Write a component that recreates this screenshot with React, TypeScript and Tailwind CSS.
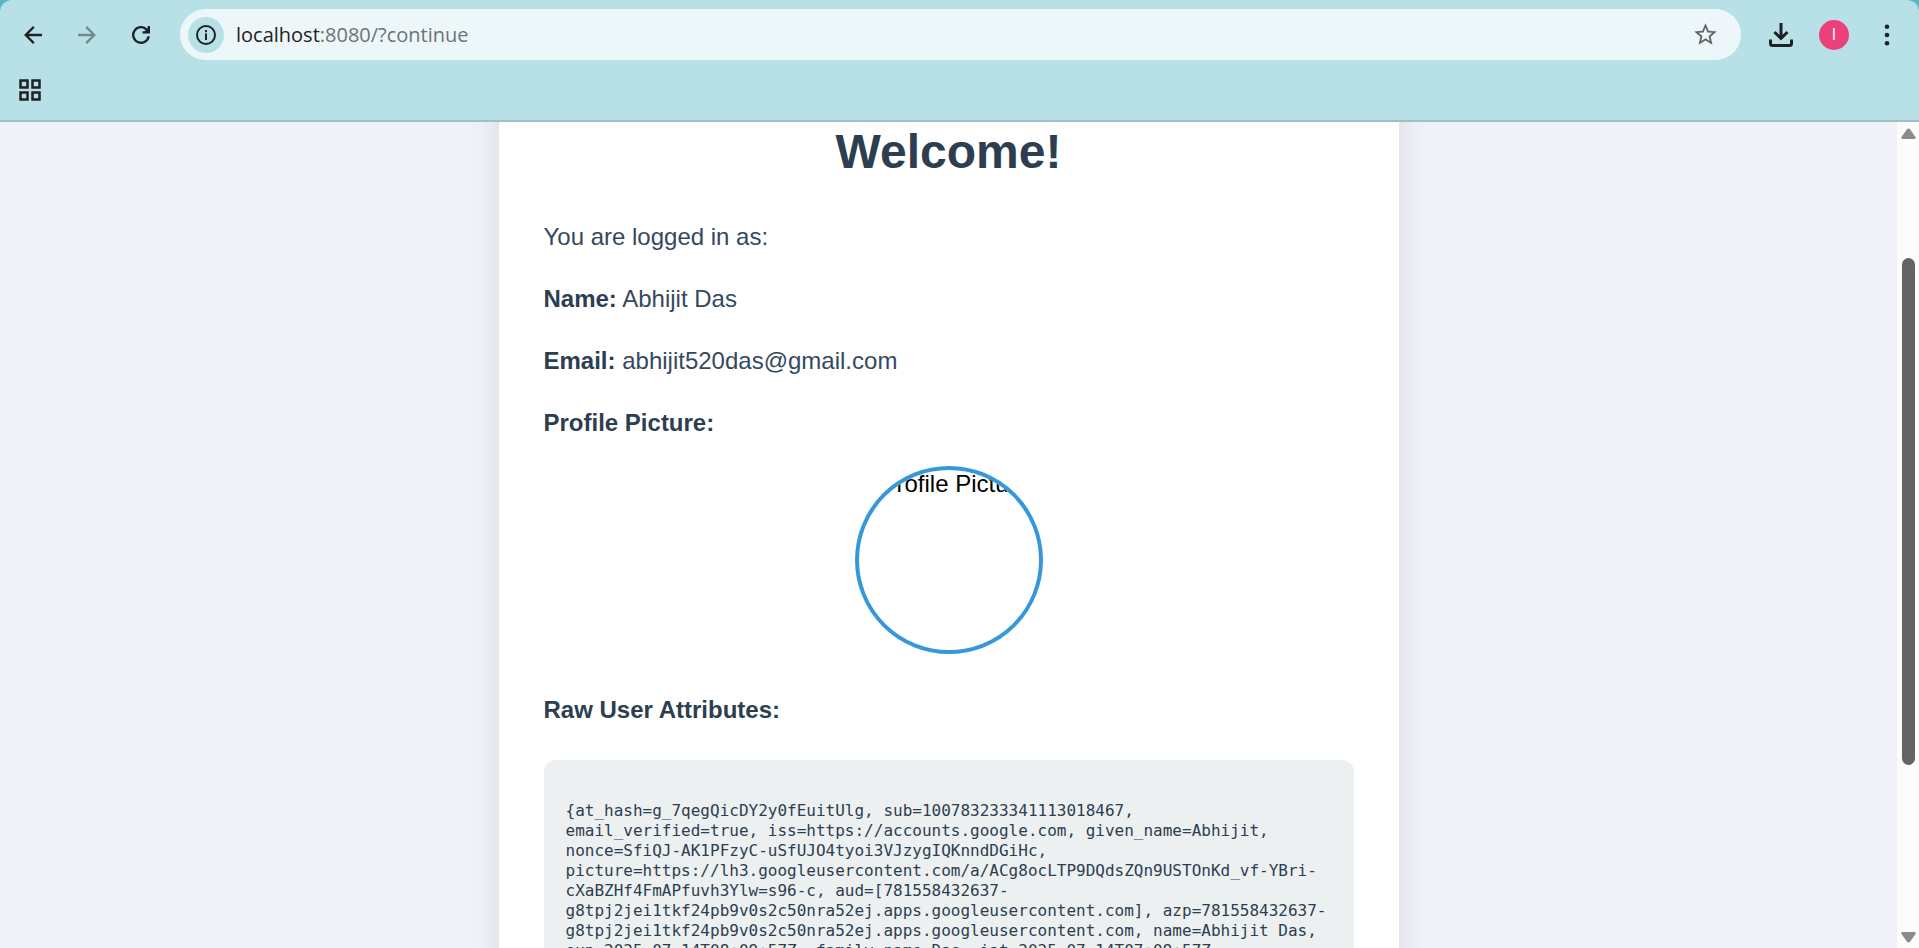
import type { ReactNode } from "react";

const attributes =
  "{at_hash=g_7qegQicDY2y0fEuitUlg, sub=100783233341113018467, email_verified=true, iss=https://accounts.google.com, given_name=Abhijit, nonce=SfiQJ-AK1PFzyC-uSfUJO4tyoi3VJzygIQKnndDGiHc, picture=https://lh3.googleusercontent.com/a/ACg8ocLTP9DQdsZQn9USTOnKd_vf-YBri-cXaBZHf4FmAPfuvh3Ylw=s96-c, aud=[781558432637-g8tpj2jei1tkf24pb9v0s2c50nra52ej.apps.googleusercontent.com], azp=781558432637-g8tpj2jei1tkf24pb9v0s2c50nra52ej.apps.googleusercontent.com, name=Abhijit Das, exp=2025-07-14T08:09:57Z, family_name=Das, iat=2025-07-14T07:09:57Z,";

function IconButton({ label, children }: { label: string; children: ReactNode }) {
  return (
    <button type="button" aria-label={label} className="flex size-9 shrink-0 items-center justify-center rounded-full text-[#1f2124]">
      {children}
    </button>
  );
}

function Arrow({ flip = false }: { flip?: boolean }) {
  return (
    <svg width="18" height="18" viewBox="0 0 18 18" fill="none" stroke="currentColor" strokeWidth="2.3" className={flip ? "-scale-x-100" : ""}>
      <path d="M18 9H2M9.8 0.900L1.700 9l8.100 8.100" />
    </svg>
  );
}

function Toolbar() {
  return (
    <div className="flex h-[69px] items-center pl-[15px] pr-[14px]">
      <nav aria-label="History" className="flex gap-[18px]">
        <IconButton label="Back">
          <Arrow />
        </IconButton>
        <button type="button" aria-label="Forward" disabled className="flex size-9 items-center justify-center text-[#73898d]">
          <Arrow flip />
        </button>
        <IconButton label="Reload">
          <svg width="18" height="18" viewBox="0 0 18 18" fill="none" stroke="currentColor" strokeWidth="2.3">
            <path d="M16.700 10.200A7.800 7.800 0 1 1 14.400 3.300L16.500 5.400" />
            <path d="M16.850 0v6.350H10.500" />
            <path d="M17 1v5.500h-5.500z" fill="currentColor" stroke="none" />
          </svg>
        </IconButton>
      </nav>
      <div className="ml-[21px] flex h-[51px] min-w-0 flex-1 items-center rounded-full bg-[#edf7f9] pl-2 pr-[18px]">
        <button type="button" aria-label="Site information" className="flex size-9 shrink-0 items-center justify-center rounded-full bg-[#b7e1e6] text-[#1f2124]">
          <svg width="20" height="20" viewBox="0 0 20 20" fill="none" stroke="currentColor" strokeWidth="2">
            <circle cx="10" cy="10" r="9" />
            <path d="M10 8.500v6.500M10 5v2.200" />
          </svg>
        </button>
        <a href="#top" className="ml-3 flex-1 truncate font-['Open_Sans','Noto_Sans',sans-serif] text-[20px] leading-7 text-[#6b7376]">
          <span className="text-[#1f2124]">localhost</span>:8080/?continue
        </a>
        <button type="button" aria-label="Bookmark this page" className="flex size-9 items-center justify-center text-[#5f6568]">
          <svg width="27" height="27" viewBox="0 0 24 24" fill="currentColor" className="shrink-0">
            <path d="M22 9.240l-7.190-.620L12 2 9.190 8.630 2 9.240l5.460 4.730L5.820 21 12 17.270 18.180 21l-1.630-7.030L22 9.240zM12 15.400l-3.760 2.270 1-4.280-3.320-2.880 4.380-.380L12 6.100l1.710 4.040 4.380.380-3.320 2.880 1 4.280L12 15.400z" />
          </svg>
        </button>
      </div>
      <div className="ml-[22px] flex items-center gap-5">
        <IconButton label="Downloads">
          <svg width="24" height="24" viewBox="0 0 24 24" fill="none" stroke="currentColor" strokeWidth="3">
            <path d="M12 0v15M5.500 9l6.500 6.500L18.500 9" />
            <path d="M1.500 16.500v4q0 2 2 2h17q2 0 2-2v-4" />
          </svg>
        </IconButton>
        <button type="button" aria-label="Profile" className="flex size-[30px] items-center justify-center rounded-full bg-[#ec407a] font-['Roboto',sans-serif] text-base text-white">
          I
        </button>
        <IconButton label="Menu">
          <svg width="6" height="22" viewBox="0 0 6 22" fill="currentColor">
            <circle cx="3" cy="2.700" r="2.300" />
            <circle cx="3" cy="11" r="2.300" />
            <circle cx="3" cy="19.300" r="2.300" />
          </svg>
        </IconButton>
      </div>
    </div>
  );
}

function BookmarksBar() {
  return (
    <div className="flex h-[51px] items-start pl-3">
      <button type="button" aria-label="Tab groups" className="flex h-[42px] w-9 items-center justify-center text-[#1f2124]">
        <svg width="22" height="22" viewBox="0 0 22 22" fill="none" stroke="currentColor" strokeWidth="2.5">
          <path d="M1.500 1.500h7v7h-7zM13.500 1.500h7v7h-7zM1.500 13.500h7v7h-7zM13.500 13.500h7v7h-7z" />
        </svg>
      </button>
    </div>
  );
}

function Scrollbar() {
  return (
    <div aria-hidden="true" className="flex w-[22px] shrink-0 flex-col items-center bg-[#fcfcfc] pb-[5px] pt-[6px]">
      <svg width="15" height="12" viewBox="0 0 15 12" fill="#8b8b8b">
        <path d="M6 1.200q1.500-1.600 3 0l5.500 7.800q.800 2-1.300 2H1.800q-2.100 0-1.300-2z" />
      </svg>
      <div className="flex w-[13px] flex-1 flex-col">
        <div className="grow-[118]" />
        <div className="grow-[507] rounded-full bg-[#636363]" />
        <div className="grow-[166]" />
      </div>
      <svg width="15" height="12" viewBox="0 0 15 12" fill="#8b8b8b" className="rotate-180">
        <path d="M6 1.200q1.500-1.600 3 0l5.500 7.800q.800 2-1.300 2H1.800q-2.100 0-1.300-2z" />
      </svg>
    </div>
  );
}

export default function App() {
  return (
    <div className="flex h-screen flex-col overflow-hidden bg-[#5bb5c9] font-['Liberation_Sans',Arial,sans-serif]">
      <header className="z-10 shrink-0 rounded-t-xl border-b-2 border-[#9fc0c7] bg-[#b7e1e6]">
        <Toolbar />
        <BookmarksBar />
      </header>
      <div className="flex min-h-0 flex-1">
        <main className="min-w-0 flex-1 overflow-hidden bg-[#f0f2f7]">
          <div className="mx-auto -mt-14 max-w-[900px] bg-white px-[45px] pb-12 pt-14 text-2xl leading-[38px] text-[#34495e] shadow-[0_10px_30px_rgba(0,0,0,0.1)]">
            <h1 className="text-center text-5xl font-bold leading-[60px] text-[#2c3e50]">Welcome!</h1>
            <div className="mt-9 flex flex-col gap-6">
              <p>You are logged in as:</p>
              <p>
                <strong className="text-[#2c3e50]">Name:</strong> Abhijit Das
              </p>
              <p>
                <strong className="text-[#2c3e50]">Email:</strong> abhijit520das@gmail.com
              </p>
              <p className="font-bold text-[#2c3e50]">Profile Picture:</p>
            </div>
            <div
              role="img"
              aria-label="Profile Picture"
              className="mx-auto mt-6 flex size-[188px] overflow-hidden whitespace-nowrap rounded-full border-4 border-[#3498db] pl-[22px] leading-7 text-black"
            >
              Profile Picture
            </div>
            <p className="mt-[37px] font-bold text-[#2c3e50]">Raw User Attributes:</p>
            <pre className="mt-[31px] whitespace-pre-wrap break-words rounded-xl bg-[#ecf0f1] px-[22px] py-[41px] font-['DejaVu_Sans_Mono',monospace] text-base leading-5 text-[#2c3e50]">
              {attributes}
            </pre>
          </div>
        </main>
        <Scrollbar />
      </div>
    </div>
  );
}
